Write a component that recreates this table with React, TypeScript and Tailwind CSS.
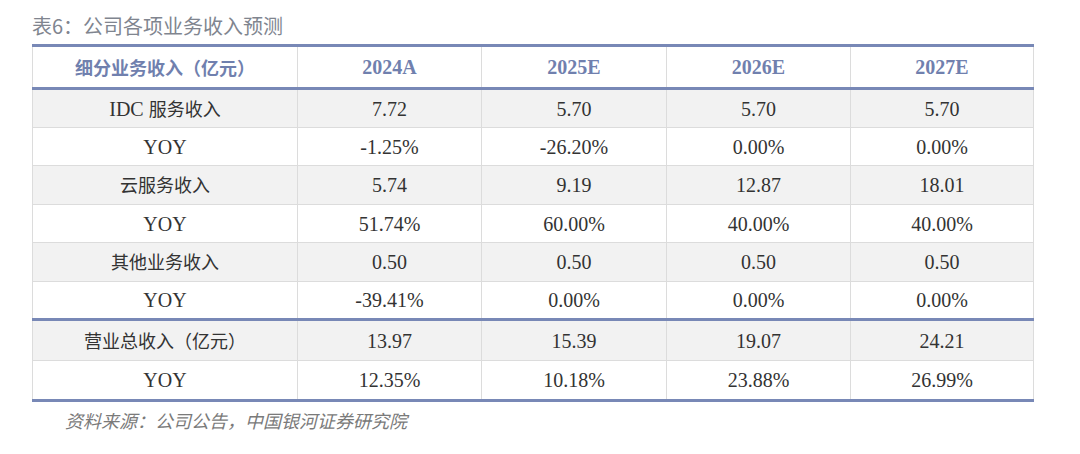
import React from "react"

type Row = {
  label: React.ReactNode
  values: string[]
  shaded?: boolean
  thickTop?: boolean
  h: string
}

const serif = "font-['Liberation_Serif','Noto_Sans_CJK_SC',serif]"

const cjk = (t: string) => <span className="text-[18px] font-['Noto_Sans_CJK_SC',sans-serif]">{t}</span>

const rows: Row[] = [
  { label: <>IDC {cjk("服务收入")}</>, values: ["7.72", "5.70", "5.70", "5.70"], shaded: true, h: "h-[39px]" },
  { label: "YOY", values: ["-1.25%", "-26.20%", "0.00%", "0.00%"], h: "h-[38px]" },
  { label: cjk("云服务收入"), values: ["5.74", "9.19", "12.87", "18.01"], shaded: true, h: "h-[39px]" },
  { label: "YOY", values: ["51.74%", "60.00%", "40.00%", "40.00%"], h: "h-[38px]" },
  { label: cjk("其他业务收入"), values: ["0.50", "0.50", "0.50", "0.50"], shaded: true, h: "h-[39px]" },
  { label: "YOY", values: ["-39.41%", "0.00%", "0.00%", "0.00%"], h: "h-[38px]" },
  { label: cjk("营业总收入（亿元）"), values: ["13.97", "15.39", "19.07", "24.21"], shaded: true, thickTop: true, h: "h-[41px]" },
  { label: "YOY", values: ["12.35%", "10.18%", "23.88%", "26.99%"], h: "h-[40px]" },
]

const years = ["2024A", "2025E", "2026E", "2027E"]

export default function App() {
  return (
    <div className={`w-[1080px] h-[454px] bg-white ${serif}`}>
      <div className="pl-[32px] pt-[12px] h-[44px] text-[20px] leading-[27px] text-[#80858f] font-['Noto_Sans_CJK_SC',sans-serif]">
        表6：公司各项业务收入预测
      </div>

      <table className="ml-[32px] w-[1001px] border-collapse table-fixed text-[20px] text-[#333]">
        <colgroup>
          <col className="w-[265px]" />
          <col className="w-[184px]" />
          <col className="w-[185px]" />
          <col className="w-[184px]" />
          <col className="w-[183px]" />
        </colgroup>
        <thead>
          <tr className="h-[43px]">
            <th className="border border-[#dcdcdc] border-t-[3px] border-t-[#7888b6] border-b-[3px] border-b-[#7888b6] text-[18px] font-semibold text-[#7080ae] font-['Noto_Sans_CJK_SC',sans-serif]">
              细分业务收入（亿元）
            </th>
            {years.map((y) => (
              <th
                key={y}
                className="border border-[#dcdcdc] border-t-[3px] border-t-[#7888b6] border-b-[3px] border-b-[#7888b6] font-bold text-[#7080ae]"
              >
                {y}
              </th>
            ))}
          </tr>
        </thead>
        <tbody>
          {rows.map((r, i) => (
            <tr key={i} className={`${r.h} ${r.shaded ? "bg-[#f2f2f2]" : "bg-white"}`}>
              <td
                className={`border border-[#dcdcdc] text-center leading-none ${r.thickTop ? "border-t-[3px] border-t-[#7888b6]" : ""} ${i === rows.length - 1 ? "border-b-[3px] border-b-[#7888b6]" : ""}`}
              >
                {r.label}
              </td>
              {r.values.map((v, j) => (
                <td
                  key={j}
                  className={`border border-[#dcdcdc] text-center leading-none ${r.thickTop ? "border-t-[3px] border-t-[#7888b6]" : ""} ${i === rows.length - 1 ? "border-b-[3px] border-b-[#7888b6]" : ""}`}
                >
                  {v}
                </td>
              ))}
            </tr>
          ))}
        </tbody>
      </table>

      <div className="pl-[65px] pt-[5px] text-[18px] italic text-[#7a7a7a] font-['Noto_Sans_CJK_SC',sans-serif]">
        资料来源：公司公告，中国银河证券研究院
      </div>
    </div>
  )
}
